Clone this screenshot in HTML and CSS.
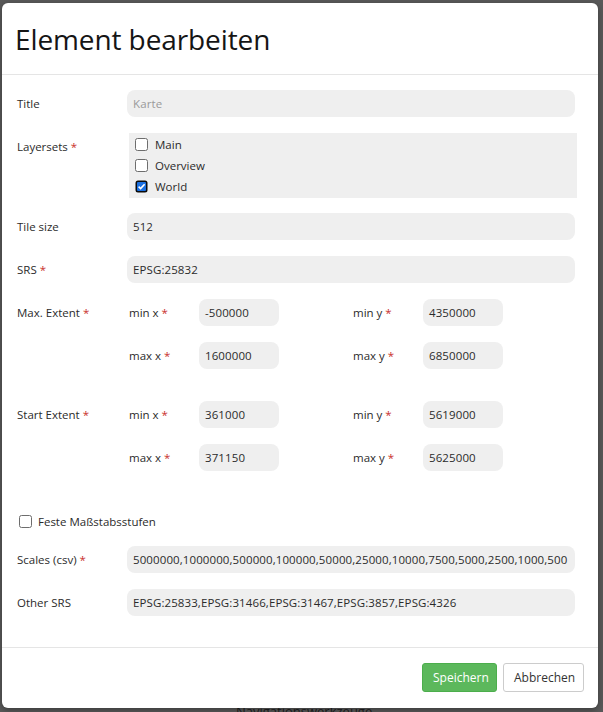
FILE: index.html
```html
<!DOCTYPE html>
<html lang="de">
<head>
<meta charset="utf-8">
<title>Element bearbeiten</title>
<link rel="stylesheet" href="styles.css">
</head>
<body>
<div class="backdrop-text">Navigationswerkzeuge</div>
<div class="modal">
  <div class="modal-header">
    <h1 class="modal-title">Element bearbeiten</h1>
  </div>
  <div class="modal-body">
    <div class="row">
      <label class="lbl">Title</label>
      <div class="input placeholder">Karte</div>
    </div>
    <div class="row row-top row-sets">
      <label class="lbl lbl-top">Layersets <span class="req">*</span></label>
      <div class="checklist">
        <div class="check-item"><span class="cb"></span>Main</div>
        <div class="check-item"><span class="cb"></span>Overview</div>
        <div class="check-item"><span class="cb cb-checked"><svg viewBox="0 0 13 13" width="13" height="13"><rect x="0.5" y="0.5" width="12" height="12" rx="2.5" fill="#0b0b0b"/><rect x="2" y="2" width="9" height="9" rx="1" fill="#1a6fe0"/><path d="M3.6 6.6 L5.6 8.5 L9.6 4.2" fill="none" stroke="#fff" stroke-width="1.6"/></svg></span>World</div>
      </div>
    </div>
    <div class="row">
      <label class="lbl">Tile size</label>
      <div class="input">512</div>
    </div>
    <div class="row">
      <label class="lbl">SRS <span class="req">*</span></label>
      <div class="input">EPSG:25832</div>
    </div>
    <div class="row row-top row-ext">
      <label class="lbl lbl-ext">Max. Extent <span class="req">*</span></label>
      <div class="extent">
        <label class="sublbl">min x <span class="req">*</span></label>
        <div class="input small">-500000</div>
        <label class="sublbl">min y <span class="req">*</span></label>
        <div class="input small">4350000</div>
        <label class="sublbl">max x <span class="req">*</span></label>
        <div class="input small">1600000</div>
        <label class="sublbl">max y <span class="req">*</span></label>
        <div class="input small">6850000</div>
      </div>
    </div>
    <div class="row row-top row-ext">
      <label class="lbl lbl-ext">Start Extent <span class="req">*</span></label>
      <div class="extent">
        <label class="sublbl">min x <span class="req">*</span></label>
        <div class="input small">361000</div>
        <label class="sublbl">min y <span class="req">*</span></label>
        <div class="input small">5619000</div>
        <label class="sublbl">max x <span class="req">*</span></label>
        <div class="input small">371150</div>
        <label class="sublbl">max y <span class="req">*</span></label>
        <div class="input small">5625000</div>
      </div>
    </div>
    <div class="check-row">
      <span class="cb"></span>Feste Maßstabsstufen
    </div>
    <div class="row">
      <label class="lbl">Scales (csv) <span class="req">*</span></label>
      <div class="input">5000000,1000000,500000,100000,50000,25000,10000,7500,5000,2500,1000,500</div>
    </div>
    <div class="row">
      <label class="lbl">Other SRS</label>
      <div class="input">EPSG:25833,EPSG:31466,EPSG:31467,EPSG:3857,EPSG:4326</div>
    </div>
  </div>
  <div class="modal-footer">
    <button class="btn btn-success">Speichern</button>
    <button class="btn btn-default">Abbrechen</button>
  </div>
</div>
</body>
</html>
```
FILE: styles.css
```css
html, body {
  margin: 0;
  padding: 0;
}
body {
  background: #595959;
  font-family: "Open Sans", "Noto Sans", "Liberation Sans", sans-serif;
  font-size: 11.5px;
  color: #2b2b2b;
  width: 603px;
  height: 712px;
  overflow: hidden;
  position: relative;
}
.backdrop-text {
  position: absolute;
  left: 236px;
  top: 703px;
  font-size: 13px;
  line-height: 16px;
  color: #1e1e1e;
}
.modal {
  position: relative;
  margin: 3px 5px 0 2px;
  width: 596px;
  height: 705px;
  background: #fff;
  border-radius: 6px;
  display: flex;
  flex-direction: column;
  box-shadow: 0 2px 6px rgba(0,0,0,0.35);
}
.modal-header {
  border-bottom: 1px solid #e5e5e5;
  padding: 0 13px;
  display: flex;
  align-items: center;
  box-sizing: border-box;
  height: 72px;
}
.modal-title {
  margin: 0;
  font-size: 28px;
  font-weight: 400;
  color: #151515;
  letter-spacing: -0.1px;
  padding-top: 1px;
}
.modal-body {
  flex: 1;
  padding: 15px 23px 0 15px;
}
.row {
  display: flex;
  align-items: center;
  margin-bottom: 16px;
}
.row-top {
  align-items: flex-start;
}
.row-sets {
  margin-bottom: 15px;
}
.row-ext {
  margin-bottom: 32px;
}
.lbl {
  width: 110px;
  flex: none;
}
.lbl-top {
  padding-top: 6px;
}
.lbl-ext {
  line-height: 27px;
}
.req {
  color: #c9302c;
}
.input {
  flex: 1;
  height: 27px;
  line-height: 27px;
  background: #efefef;
  border-radius: 8px;
  padding: 0 6px;
  white-space: nowrap;
  overflow: hidden;
  color: #2b2b2b;
  letter-spacing: 0.1px;
}
.placeholder {
  color: #9a9a9a;
}
.checklist {
  flex: 1;
  background: #efefef;
  margin: 0 -2px 0 2px;
  padding: 1px 6px;
  height: 65px;
  box-sizing: border-box;
}
.check-item {
  height: 21px;
  display: flex;
  align-items: center;
}
.cb {
  width: 13px;
  height: 13px;
  box-sizing: border-box;
  border: 1px solid #6d6d6d;
  border-radius: 2.5px;
  background: #fff;
  margin-right: 7px;
  flex: none;
  display: inline-block;
}
.cb-checked {
  border: none;
  background: none;
}
.cb-checked svg {
  display: block;
}
.extent {
  flex: 1;
  display: grid;
  grid-template-columns: 70px 154px 70px 80px;
  grid-auto-rows: 27px;
  row-gap: 16px;
  align-items: center;
  padding-left: 2px;
}
.extent .input {
  width: 80px;
  box-sizing: border-box;
  justify-self: start;
}
.sublbl {
  white-space: nowrap;
}
.check-row {
  display: flex;
  align-items: center;
  margin: 44px 0 18px 2px;
  height: 13px;
}
.check-row .cb {
  margin-right: 6px;
}
.modal-footer {
  border-top: 1px solid #e5e5e5;
  height: 61px;
  box-sizing: border-box;
  display: flex;
  justify-content: flex-end;
  align-items: flex-start;
  padding: 15px 14px 0 0;
  gap: 6px;
}
.btn {
  font-family: inherit;
  font-size: 12px;
  height: 29px;
  padding: 0 10px;
  border-radius: 3px;
  border: 1px solid transparent;
  cursor: pointer;
}
.btn-success {
  background: #5cb85c;
  border-color: #4cae4c;
  color: #fff;
  width: 75px;
}
.btn-default {
  background: #fff;
  border-color: #ccc;
  color: #333;
  width: 81px;
}
```
